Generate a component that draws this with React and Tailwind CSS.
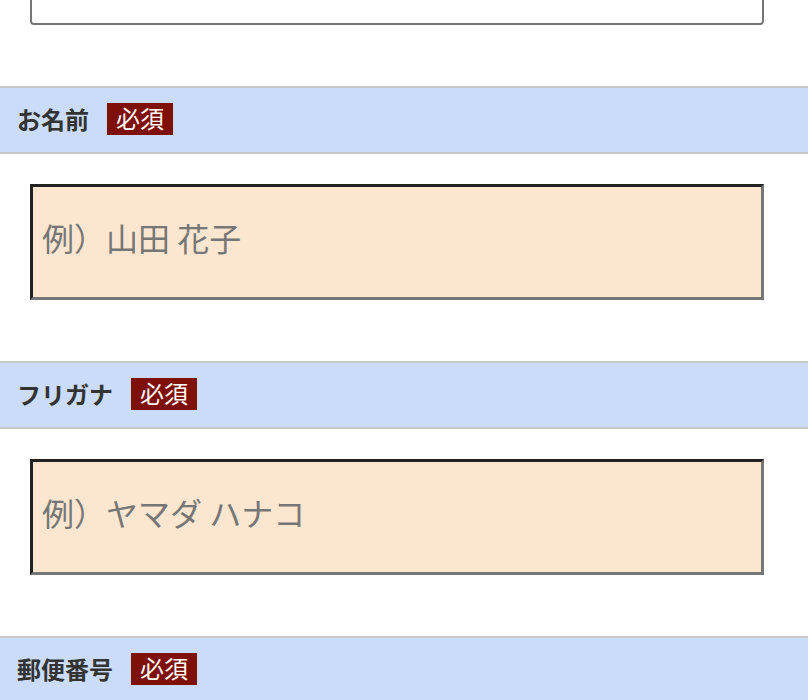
import React from 'react'

const fields = [
  { id: 'name', label: 'お名前', placeholder: '例）山田 花子' },
  { id: 'kana', label: 'フリガナ', placeholder: '例）ヤマダ ハナコ' },
  { id: 'zip', label: '郵便番号', placeholder: '' },
]

const font = { fontFamily: '"Noto Sans CJK JP", "Noto Sans", sans-serif' }

const Field = ({ field, last }) => (
  <div>
    <div className="flex items-center h-[68px] bg-[#cadcf9] border-y-2 border-[#c8c8c8] pl-[17px] pb-[3px]">
      <span className="text-[24px] leading-none font-bold text-[#333333] mr-[18px]">{field.label}</span>
      <span className="inline-flex items-center justify-center h-[32px] w-[66px] bg-[#7f1008] text-white text-[24px] leading-none pb-[2px]">
        必須
      </span>
    </div>
    {!last && (
      <div className="pt-[30px] pb-[61px] pl-[30px]">
        <input
          type="text"
          placeholder={field.placeholder}
          className="block w-[734px] h-[116px] bg-[#fde6cf] border-[3px] border-t-[#222222] border-l-[#222222] border-b-[#767676] border-r-[#767676] pl-[9px] pb-[10px] text-[32px] text-[#333] placeholder:text-[#767676] outline-none"
          style={font}
        />
      </div>
    )}
  </div>
)

const App = () => {
  return (
    <div className="w-[808px] h-[700px] overflow-hidden bg-white" style={font}>
      <div className="pl-[30px] pb-[61px] -mt-[95px]">
        <textarea className="block w-[734px] h-[120px] border-2 border-[#767676] rounded-[4px] bg-white resize-none outline-none" />
      </div>
      {fields.map((f, i) => (
        <Field key={f.id} field={f} last={i === fields.length - 1} />
      ))}
    </div>
  )
}

export default App
